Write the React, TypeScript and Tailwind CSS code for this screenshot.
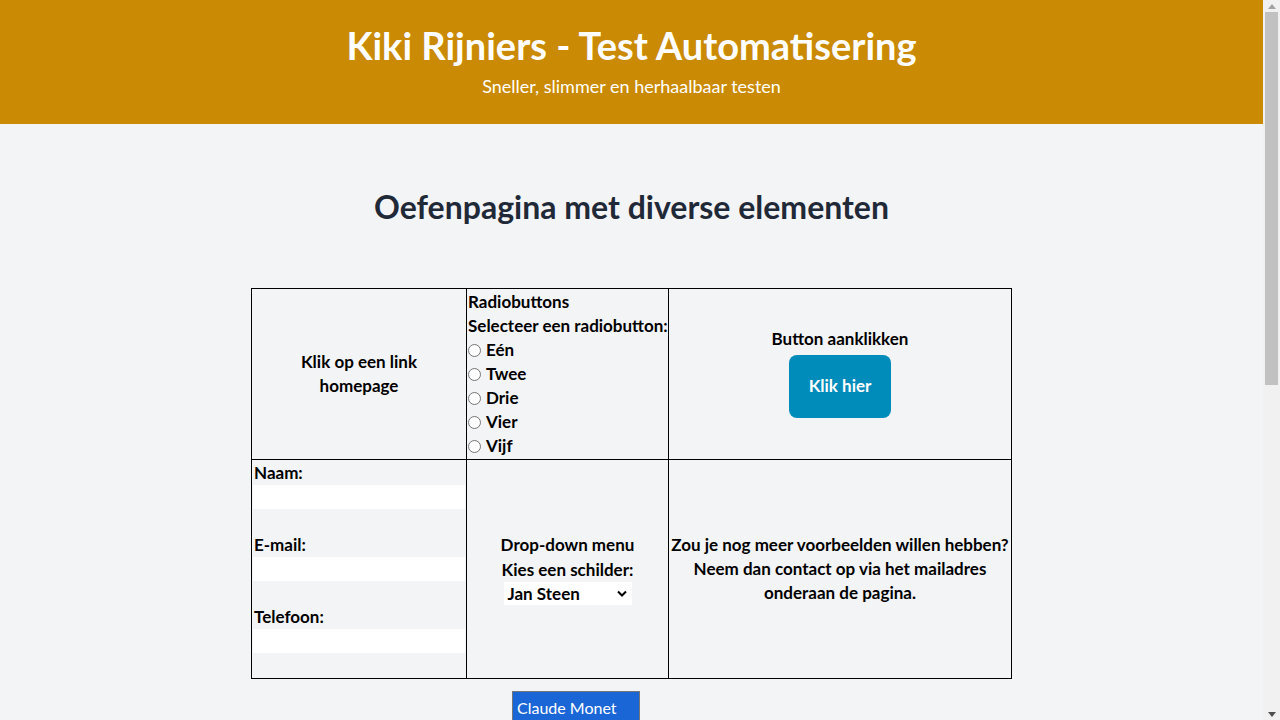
import React from 'react';

const radios = ['Eén', 'Twee', 'Drie', 'Vier', 'Vijf'];

export default function App() {
  return (
    <div className="flex h-[720px] overflow-hidden bg-[#f3f4f6] font-['Lato',sans-serif] text-black">
      <main className="w-[1263px] shrink-0">
        <header className="flex h-[124px] flex-col items-center bg-[#cb8a03] pt-[21px] text-white">
          <h1 className="text-[38px] font-bold leading-[48px]">Kiki Rijniers - Test Automatisering</h1>
          <p className="text-[18px] leading-[34px]">Sneller, slimmer en herhaalbaar testen</p>
        </header>

        <h2 className="mt-[63px] text-center text-[32px] font-bold leading-[40px] text-[#1f2937]">
          Oefenpagina met diverse elementen
        </h2>

        <div className="mt-[61px] flex justify-center">
          <table className="w-[760px] table-fixed border-collapse border border-black text-[17px] font-bold leading-[24px]">
            <colgroup>
              <col className="w-[215px]" />
              <col className="w-[202px]" />
              <col className="w-[343px]" />
            </colgroup>
            <tbody>
              <tr className="h-[171px]">
                <td className="border border-black px-[2px] text-center">
                  Klik op een link
                  <br />
                  homepage
                </td>
                <td className="border border-black p-0 align-top">
                  <div className="pl-px pt-px">Radiobuttons</div>
                  <div className="whitespace-nowrap pl-px">Selecteer een radiobutton:</div>
                  {radios.map((r) => (
                    <label key={r} className="flex h-[24px] items-center gap-[5px]">
                      <span className="ml-[1px] h-[13px] w-[13px] rounded-full border border-[#767676] bg-white" />
                      {r}
                    </label>
                  ))}
                </td>
                <td className="border border-black">
                  <div className="flex flex-col items-center">
                    <div>Button aanklikken</div>
                    <button className="my-[4px] h-[63px] w-[102px] rounded-[8px] bg-[#008cba] text-white">Klik hier</button>
                  </div>
                </td>
              </tr>
              <tr className="h-[219px]">
                <td className="border border-black px-[1px] align-top">
                  <div className="pl-px pt-px">Naam:</div>
                  <div className="h-[24px] bg-white" />
                  <div className="h-[24px]" />
                  <div className="pl-px">E-mail:</div>
                  <div className="h-[24px] bg-white" />
                  <div className="h-[24px]" />
                  <div className="pl-px">Telefoon:</div>
                  <div className="h-[24px] bg-white" />
                </td>
                <td className="border border-black text-center">
                  <div className="pb-[1px]">Drop-down menu</div>
                  <div>Kies een schilder:</div>
                  <div className="flex justify-center">
                    <div className="flex h-[23px] w-[128px] items-center justify-between bg-white pl-[4px] pr-[5px]">
                      <span>Jan Steen</span>
                      <svg width="10" height="7" viewBox="0 0 10 7" fill="none">
                        <path d="M1 1.5l4 4 4-4" stroke="black" strokeWidth="2" />
                      </svg>
                    </div>
                  </div>
                </td>
                <td className="border border-black text-center">
                  <div className="whitespace-nowrap">Zou je nog meer voorbeelden willen hebben?</div>
                  <div>Neem dan contact op via het mailadres</div>
                  <div>onderaan de pagina.</div>
                </td>
              </tr>
            </tbody>
          </table>
        </div>

        <div className="ml-[512px] mt-[12px] w-[128px] border border-[#767676] bg-white">
          <div className="bg-[#1a66d6] px-[4px] pt-[2px] text-[16px] leading-[28px] text-white">Claude Monet</div>
          <div className="px-[4px] text-[16px] leading-[28px]">Rembrandt</div>
        </div>
      </main>

      <aside className="flex w-[17px] shrink-0 flex-col items-center bg-[#f1f1f1]">
        <div className="flex h-[12px] items-center justify-center">
          <svg width="8" height="5" viewBox="0 0 8 5">
            <path d="M0 5L4 0L8 5Z" fill="#a3a3a3" />
          </svg>
        </div>
        <div className="h-[373px] w-[13px] bg-[#c1c1c1]" />
        <div className="flex-1" />
        <div className="flex h-[12px] items-center justify-center">
          <svg width="8" height="5" viewBox="0 0 8 5">
            <path d="M0 0L8 0L4 5Z" fill="#505050" />
          </svg>
        </div>
      </aside>
    </div>
  );
}
